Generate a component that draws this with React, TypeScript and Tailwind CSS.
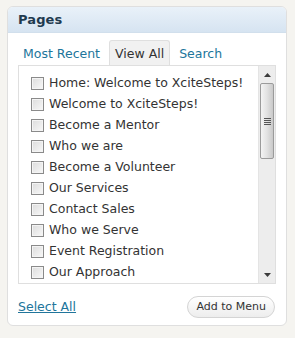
import { useState } from 'react';

const pages = [
  'Home: Welcome to XciteSteps!',
  'Welcome to XciteSteps!',
  'Become a Mentor',
  'Who we are',
  'Become a Volunteer',
  'Our Services',
  'Contact Sales',
  'Who we Serve',
  'Event Registration',
  'Our Approach',
];

const Checkbox = () => (
  <span className="w-[13px] h-[13px] shrink-0 border border-[#8a8a8a] bg-gradient-to-br from-[#dcdcdc] to-[#f8f8f8] shadow-[inset_0_0_0_1px_#f4f4f4]" />
);

const Scrollbar = () => (
  <div className="w-[17px] shrink-0 flex flex-col bg-[#ededed] border-l border-[#e4e4e4]">
    <div className="h-[17px] flex items-center justify-center">
      <svg width="7" height="4" viewBox="0 0 7 4">
        <path d="M3.5 0 L7 4 L0 4 Z" fill="#3c3c3c" />
      </svg>
    </div>
    <div className="h-[76px] mx-[1px] rounded-[2px] border border-[#9b9b9b] bg-gradient-to-r from-[#f4f4f4] via-[#e2e2e2] to-[#c9c9c9] flex flex-col items-center justify-center gap-[1px]">
      <span className="w-[7px] h-[1px] bg-[#555]" />
      <span className="w-[7px] h-[1px] bg-[#555]" />
      <span className="w-[7px] h-[1px] bg-[#555]" />
      <span className="w-[7px] h-[1px] bg-[#555]" />
    </div>
    <div className="flex-1" />
    <div className="h-[17px] flex items-center justify-center">
      <svg width="7" height="4" viewBox="0 0 7 4">
        <path d="M0 0 L7 0 L3.5 4 Z" fill="#3c3c3c" />
      </svg>
    </div>
  </div>
);

const App = () => {
  const [tab, setTab] = useState('View All');
  const tabs = ['Most Recent', 'View All', 'Search'];

  return (
    <div
      className="w-[295px] h-[338px] bg-[#f5f4f0] pt-[6px] pl-[7px]"
      style={{ fontFamily: '"DejaVu Sans", Verdana, sans-serif' }}
    >
      <div className="w-[280px] h-[320px] bg-white border border-[#dfdfdf] rounded-[6px] overflow-hidden flex flex-col">
        <div className="h-[26px] shrink-0 bg-gradient-to-b from-[#e9f1f9] to-[#d6e4f1] border-b border-[#d1dfec] flex items-center pl-[10px]">
          <h3 className="text-[13px] font-bold text-[#1e3a4f] tracking-[0.1px]">Pages</h3>
        </div>

        <div className="px-[10px] pt-[7px]">
          <div className="flex items-end h-[25px] gap-[4px]">
            {tabs.map((t) => (
              <button
                key={t}
                onClick={() => setTab(t)}
                className={
                  t === tab
                    ? 'h-[25px] px-[5px] text-[12.5px] text-[#333] bg-[#f1f1f1] border border-b-0 border-[#dfdfdf] rounded-t-[3px] leading-[25px]'
                    : 'h-[25px] px-[5px] text-[12.5px] text-[#21759b] leading-[27px]'
                }
              >
                {t}
              </button>
            ))}
          </div>

          <div className="h-[219px] border border-[#dfdfdf] flex">
            <div className="flex-1 overflow-hidden pt-[7px] pl-[12px]">
              {pages.map((p) => (
                <label key={p} className="h-[21px] flex items-center gap-[5px] text-[12.5px] text-[#333] whitespace-nowrap">
                  <Checkbox />
                  <span>{p}</span>
                </label>
              ))}
            </div>
            <Scrollbar />
          </div>

          <div className="flex items-center justify-between mt-[12px]">
            <a href="#" className="text-[12.5px] text-[#21759b] underline">
              Select All
            </a>
            <button className="h-[22px] px-[8px] mr-[1px] rounded-full border border-[#d4d4d4] bg-gradient-to-b from-white to-[#ededed] text-[11px] text-[#333]">
              Add to Menu
            </button>
          </div>
        </div>
      </div>
    </div>
  );
};

export default App;
